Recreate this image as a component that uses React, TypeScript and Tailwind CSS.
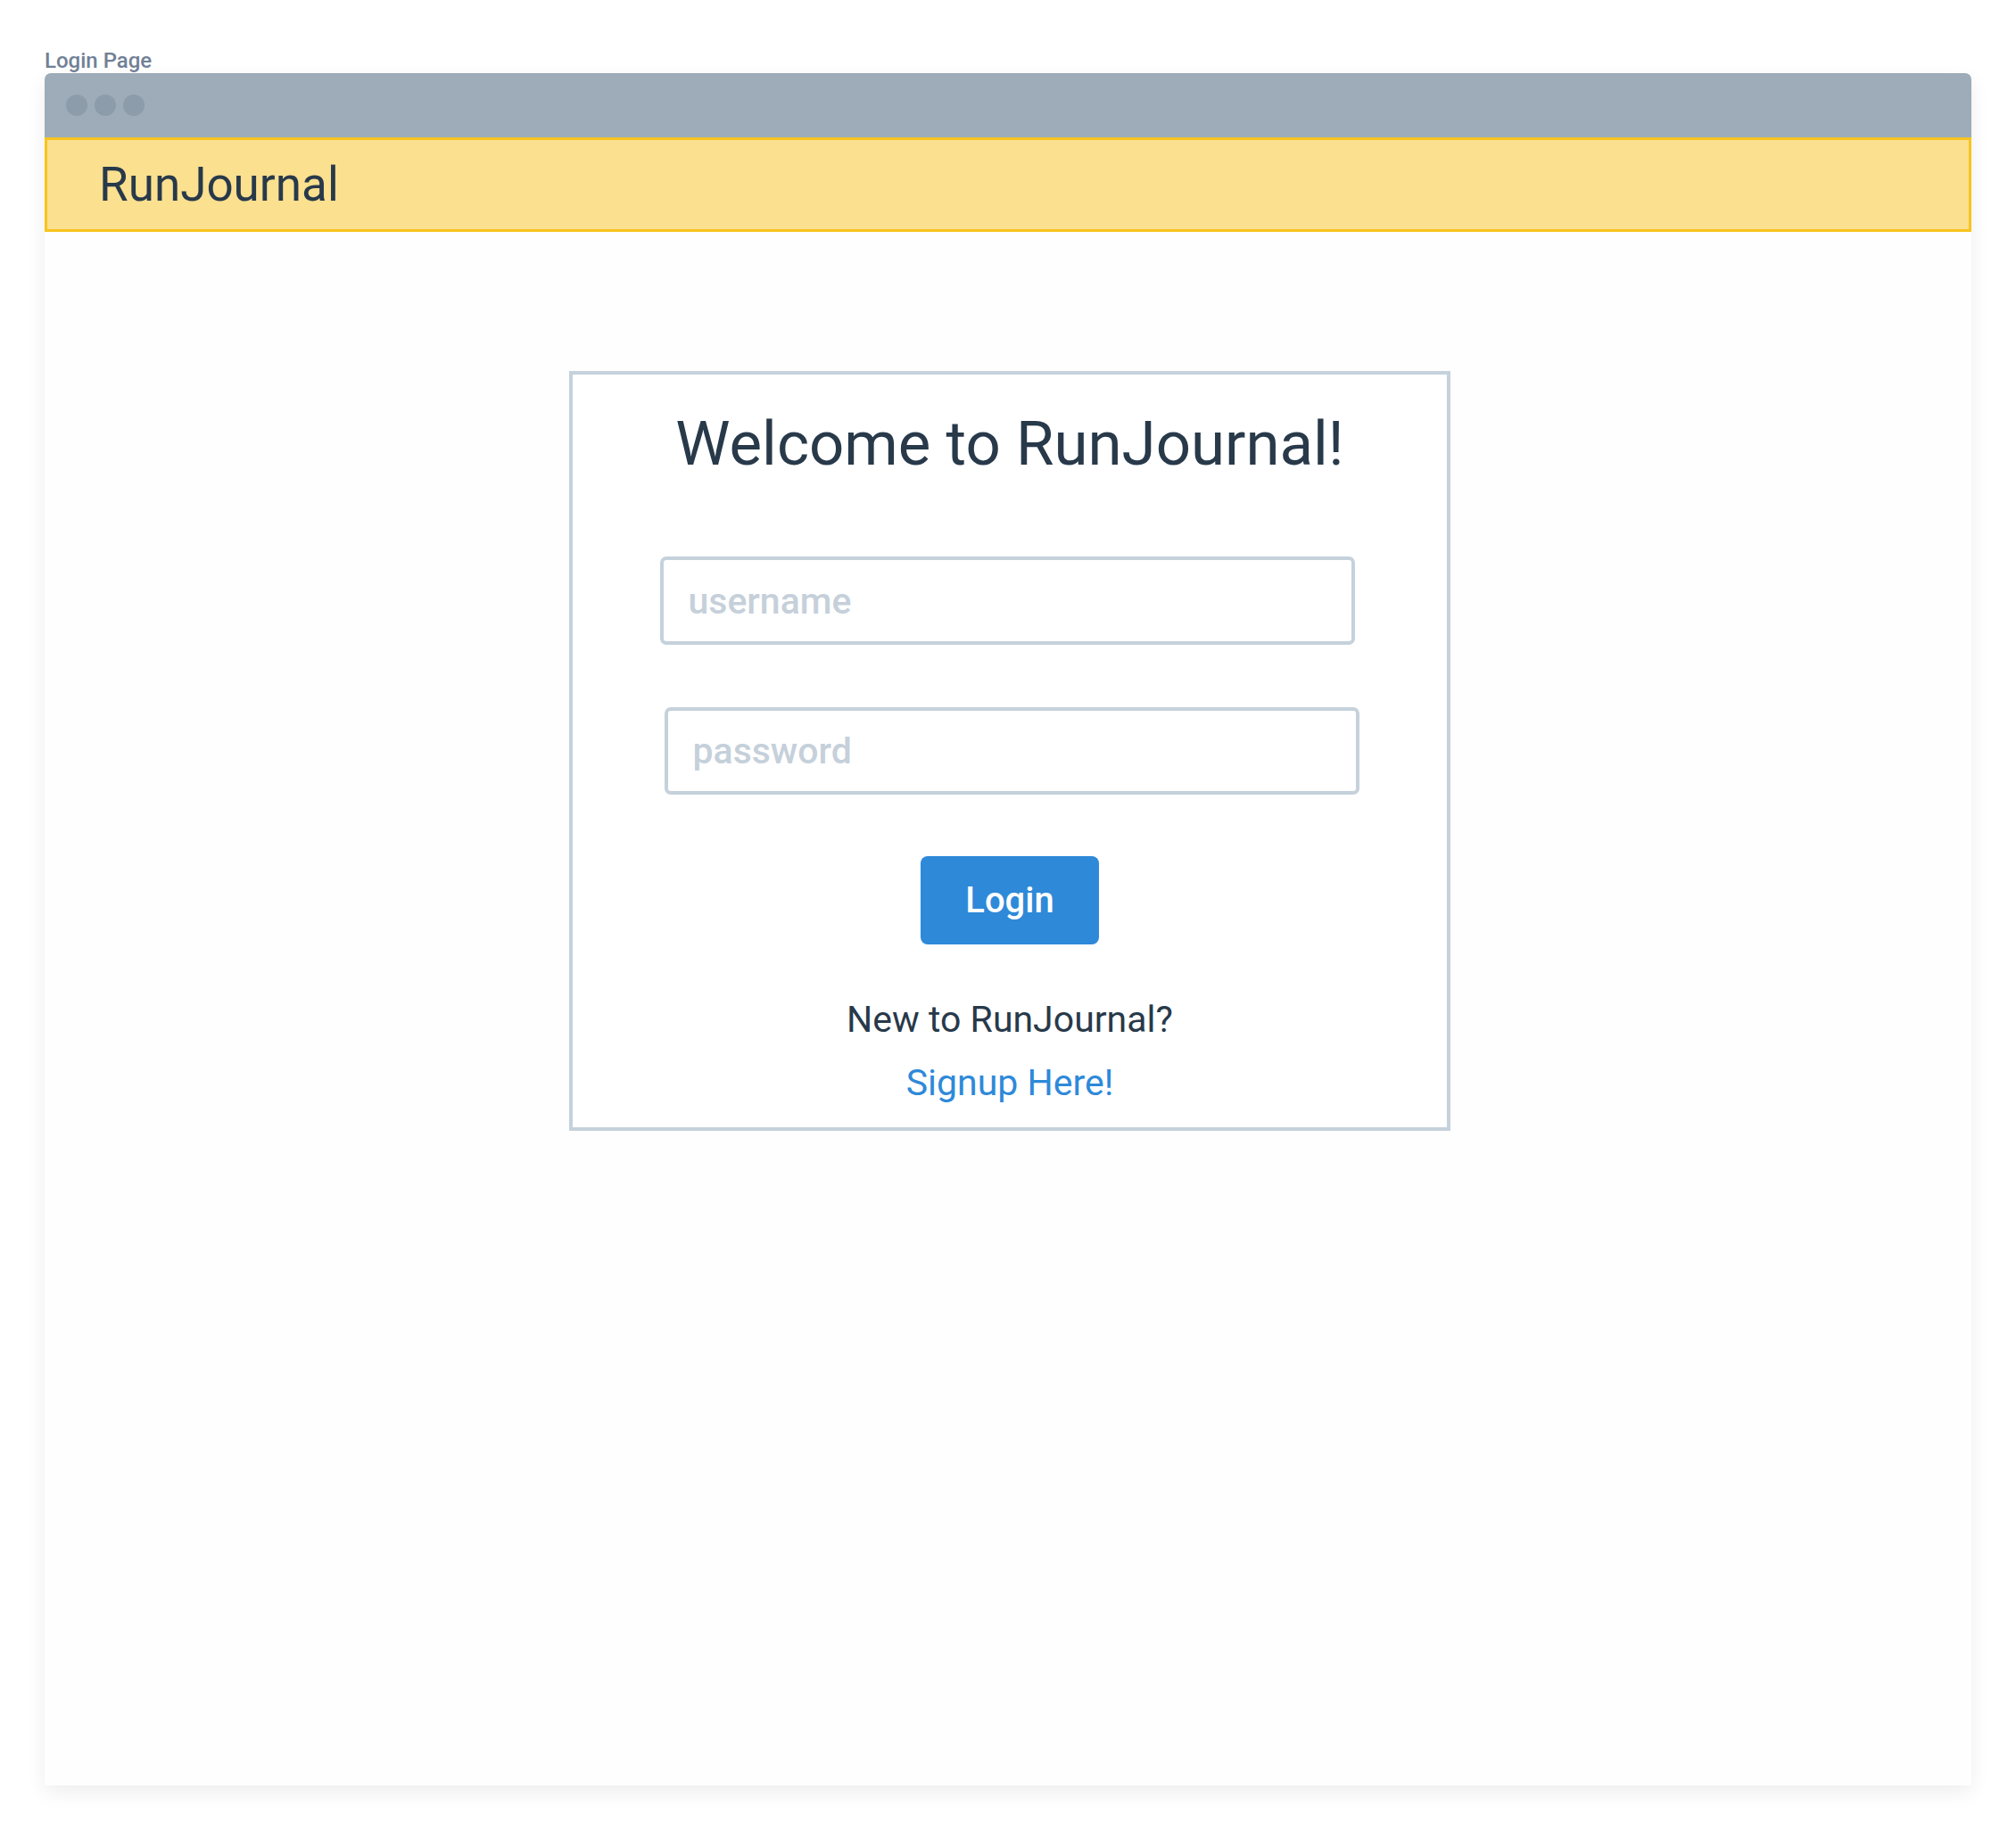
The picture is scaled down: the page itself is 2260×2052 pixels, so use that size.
import React from "react";

export default function App() {
  return (
    <div className="min-h-[2052px] w-[2260px] bg-white px-[50px] pt-[56px] font-['Roboto',sans-serif]">
      <div className="mb-[2px] text-[24px] leading-[24px] font-medium text-[#718096]">Login Page</div>
      <div className="flex h-[1920px] w-[2160px] flex-col rounded-t-[7px] bg-[#fefefe] shadow-[0_8px_22px_rgba(0,0,0,0.07)]">
        <div className="flex h-[72px] shrink-0 items-center gap-[8px] rounded-t-[7px] bg-[#9DACB8] pl-[24px]">
          <div className="h-[24px] w-[24px] rounded-full bg-[#8D9CAA]" />
          <div className="h-[24px] w-[24px] rounded-full bg-[#8D9CAA]" />
          <div className="h-[24px] w-[24px] rounded-full bg-[#8D9CAA]" />
        </div>
        <div className="flex h-[106px] shrink-0 items-center border-[3px] border-[#F8C31F] bg-[#FAE08F] pl-[58px]">
          <span className="text-[53px] leading-[60px] text-[#28394A]">RunJournal</span>
        </div>
        <div className="flex justify-center pt-[156px]">
          <div className="ml-[4px] flex h-[852px] w-[988px] flex-col items-center border-4 border-[#C5D1DB] bg-white pt-[38px]">
            <h1 className="text-[69px] leading-[80px] font-normal text-[#28394A]">Welcome to RunJournal!</h1>
            <input
              className="mt-[86px] mr-[6px] h-[99px] w-[779px] rounded-[7px] border-4 border-[#C5D1DB] bg-white px-[28px] text-[41px] text-[#28394A] outline-none placeholder:font-medium placeholder:text-[#C5D0DA]"
              placeholder="username"
            />
            <input
              type="password"
              className="mt-[70px] ml-[4px] h-[98px] w-[779px] rounded-[7px] border-4 border-[#C5D1DB] bg-white px-[28px] text-[41px] text-[#28394A] outline-none placeholder:font-medium placeholder:text-[#C5D0DA]"
              placeholder="password"
            />
            <button className="mt-[69px] flex h-[99px] w-[200px] items-center justify-center rounded-[8px] bg-[#2E89D9] text-[40px] leading-[48px] font-medium text-white">
              Login
            </button>
            <div className="mt-[60px] text-[41px] leading-[48px] text-[#28394A]">New to RunJournal?</div>
            <a className="mt-[23px] text-[41px] leading-[48px] text-[#2E89D9]">Signup Here!</a>
          </div>
        </div>
      </div>
    </div>
  );
}
